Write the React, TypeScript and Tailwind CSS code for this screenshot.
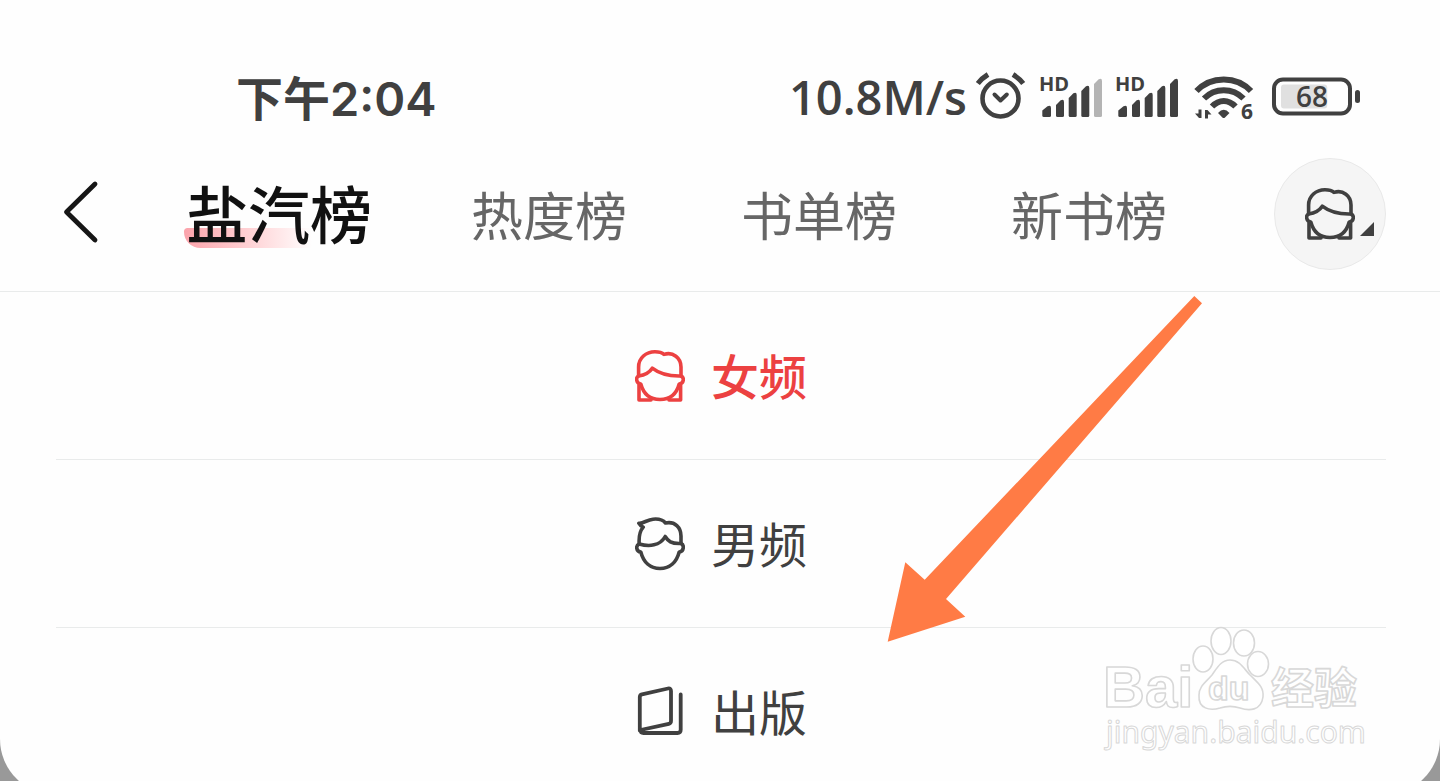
import React, { useState } from 'react'
import clsx from 'clsx'

type ChannelId = 'female' | 'male' | 'publish'

const TABS = ['热度榜', '书单榜', '新书榜']

const CHANNELS: { id: ChannelId; label: string }[] = [
  { id: 'female', label: '女频' },
  { id: 'male', label: '男频' },
  { id: 'publish', label: '出版' },
]

const FemaleIcon: React.FC = () => (
  <svg width="50" height="54" viewBox="0 0 50 54" fill="none" stroke="currentColor" strokeWidth="3.6" strokeLinejoin="round" strokeLinecap="round">
    <path d="M3.6 27V18C3.6 9 11 2.8 20 2.8C24 2.8 27 3.6 29 5.4C38 2.4 46 9 46 18V27" />
    <path d="M3.6 27C10 26 14.5 23.5 17.3 19.2C24 24.5 32 27.4 46 27C49.5 28.5 49 34.5 44.2 35C41.5 45 34.5 50.5 25 50.5C15.5 50.5 8.5 45 5.8 35C1 34.5 0.5 28.5 3.6 27Z" />
    <path d="M4 36V51H16M45.6 36V51H34" />
  </svg>
)

const MaleIcon: React.FC = () => (
  <svg width="50" height="54" viewBox="0 0 50 54" fill="none" stroke="currentColor" strokeWidth="3.6" strokeLinejoin="round" strokeLinecap="round">
    <path d="M4.2 27C3.7 20 4.5 14.5 8.2 10.2C6.5 9.5 4.8 8 3.8 6.2C8 6.8 12 2.8 18 2.2C24 1.6 28 3 30.5 6C40 4 46 10.5 46 19V26.5" />
    <path d="M4.2 27C14 29.8 25 29 30.2 19.5C33 24 36 27 46 26.5C49.5 28 49 34.5 44.2 35C41.5 45.5 34.5 51.5 25 51.5C15.5 51.5 8.5 45.5 5.8 35C1 34.5 0.5 28.5 4.2 27Z" />
  </svg>
)

const BookIcon: React.FC = () => (
  <svg width="50" height="54" viewBox="0 0 50 54" fill="none" stroke="currentColor" strokeWidth="3.8" strokeLinejoin="round" strokeLinecap="round">
    <path d="M4.8 45.5V12Q4.8 9.8 7 9.3L33 3.5Q36 3 36 6V36Q36 38.3 33.8 38.8L5.5 45Q5.5 48 8.5 48H42.5Q45.7 48 45.7 44.8V9.5" />
  </svg>
)

const CHANNEL_ICONS = { female: FemaleIcon, male: MaleIcon, publish: BookIcon }

const AlarmIcon: React.FC = () => (
  <svg width="52" height="48" viewBox="0 2 52 48" className="overflow-visible" fill="none" stroke="#404040" strokeWidth="4.6" strokeLinecap="round" strokeLinejoin="round">
    <circle cx="25.5" cy="26.5" r="18" />
    <path d="M19.5 22.5L25.5 28.5L31.8 22.5" strokeWidth="4" />
    <path d="M2.8 11.5Q6.5 6.5 13 2.5M38 2.5Q44.5 6.5 48.2 11.5" strokeLinecap="butt" strokeWidth="5" />
  </svg>
)

const SIGNAL_BARS = [
  'M3.3 36.5L8.5 32.3Q12 30.5 12 34V41.5Q12 43 10.5 43H4.8Q3.3 43 3.3 41.5Z',
  'M17 31L21.7 26.2Q25 24.5 25 28V41.5Q25 43 23.5 43H18.5Q17 43 17 41.5Z',
  'M29.7 24L34.4 19.2Q37.7 17.5 37.7 21V41.5Q37.7 43 36.2 43H31.2Q29.7 43 29.7 41.5Z',
  'M42.3 17L47 12.2Q50.3 10.5 50.3 14V41.5Q50.3 43 48.8 43H43.8Q42.3 43 42.3 41.5Z',
  'M55 10L59.7 5.2Q63 3.5 63 7V41.5Q63 43 61.5 43H56.5Q55 43 55 41.5Z',
]

const SignalIcon: React.FC<{ level: number }> = ({ level }) => (
  <svg width="64" height="48" viewBox="0 0 64 48" className="overflow-visible font-['Open_Sans',sans-serif] font-bold">
    <text x="0" y="17" fontSize="20" fill="#404040">HD</text>
    {SIGNAL_BARS.map((d, idx) => (
      <path key={d} d={d} fill={idx < level ? '#404040' : '#b4b4b4'} />
    ))}
  </svg>
)

const WifiIcon: React.FC = () => (
  <svg width="63" height="48" viewBox="-3 0 63 48" className="overflow-visible font-['Open_Sans',sans-serif] font-bold">
    <g fill="none" stroke="#404040" strokeWidth="6">
      <path d="M2.5 17C17 1.5 42.5 1.5 57 17" />
      <path d="M10 24.5C21 13.5 38.5 13.5 49.5 24.5" />
      <path d="M18 32.5C25 25 34.5 25 41.5 32.5" />
    </g>
    <path d="M24 39Q29.7 32.5 35.5 39L31 43.5Q29.7 44.7 28.4 43.5Z" fill="#404040" />
    <path d="M4.5 35.5H7.5V44H5L1 39.5H4.5ZM11 36H13.5L17.5 40.5H14V44.5H11Z" fill="#404040" />
    <text x="47" y="45" fontSize="21" fill="#404040">6</text>
  </svg>
)

const BatteryIcon: React.FC<{ percent: number }> = ({ percent }) => (
  <svg width="94" height="48" viewBox="-6 0 94 48" className="font-['Open_Sans',sans-serif] font-semibold">
    <rect x="2" y="5.5" width="76" height="34" rx="9" fill="none" stroke="#404040" strokeWidth="4" />
    <rect x="9" y="10.5" width={percent * 0.68} height="24" rx="3" fill="#e0e0e0" />
    <rect x="83" y="16" width="5" height="13" rx="2.5" fill="#404040" />
    <text x="40" y="33" fontSize="28" textAnchor="middle" fill="#404040">{percent}</text>
  </svg>
)

const StatusBar: React.FC = () => (
  <div className="flex items-center justify-between pt-[72px] pr-20 pl-[236px] text-[47px] leading-[48px] font-semibold text-[#404040]">
    <span>
      下午<span className="font-['Inter',sans-serif]">2:04</span>
    </span>
    <div className="flex items-center gap-3">
      <div className="flex items-center gap-2">
        <span className="pb-0.5 font-['Open_Sans',sans-serif]">10.8M/s</span>
        <AlarmIcon />
      </div>
      <SignalIcon level={4} />
      <SignalIcon level={5} />
      <WifiIcon />
      <BatteryIcon percent={68} />
    </div>
  </div>
)

const Watermark: React.FC = () => (
  <svg
    width="270"
    height="130"
    viewBox="0 0 270 130"
    className="pointer-events-none absolute right-[70px] bottom-[25px] font-['Liberation_Sans','Noto_Sans_CJK_SC',sans-serif]"
    fill="#ffffff"
    stroke="#d8d8d8"
    strokeWidth="1.6"
    strokeLinejoin="round"
  >
    <g fontWeight="700">
      <text x="3" y="81" fontSize="58">Bai</text>
      <ellipse cx="103" cy="33" rx="10" ry="13" />
      <ellipse cx="121" cy="15" rx="10" ry="13.5" />
      <ellipse cx="144" cy="17" rx="10.5" ry="13" />
      <ellipse cx="158" cy="38" rx="10.5" ry="12.5" />
      <path d="M130 34C140 34 144 43 150 49C158 57 164 61 163 71C161 85 149 85 140 82C134 80 126 80 120 82C110 85 98 83 99 69C99 60 106 56 112 49C117 42 121 34 130 34Z" />
      <text x="108" y="74" fontSize="34">du</text>
      <text x="171" y="78" fontSize="43">经验</text>
    </g>
    <text x="6" y="117" fontSize="30" strokeWidth="1" className="font-['Noto_Sans',sans-serif]">jingyan.baidu.com</text>
  </svg>
)

const PointerArrow: React.FC = () => (
  <svg width="316" height="347" viewBox="0 0 316 347" className="pointer-events-none absolute top-[295px] left-[887px]">
    <path d="M0.7 346.7L18.3 267.3L37.7 284.7L307.3 1L315 8.3L59 304L78.3 321.7Z" fill="#ff7b45" />
  </svg>
)

export default function App() {
  const [channel, setChannel] = useState<ChannelId>('female')
  const CurrentIcon = CHANNEL_ICONS[channel]

  return (
    <div className="relative h-screen overflow-hidden bg-[#999999] font-['Noto_Sans_CJK_SC',sans-serif]">
      <main className="rounded-b-[56px] bg-[#fefefe]">
        <StatusBar />

        <header className="flex items-center border-b border-[#e9ebeb] pt-[35px] pr-[54px] pb-[21px] pl-16">
          <button aria-label="返回" className="text-[#161616]">
            <svg width="34" height="62" viewBox="0 2 34 62" className="overflow-visible" fill="none" stroke="currentColor" strokeWidth="4.8" strokeLinecap="round" strokeLinejoin="round">
              <path d="M31 3L2.5 31L31 59" />
            </svg>
          </button>

          <nav className="mr-[107px] ml-[88px] flex flex-1 items-center">
            <button className="relative mr-[99px] pb-1 text-[62px] leading-[72px] font-medium whitespace-nowrap text-[#111111]">
              <span className="absolute bottom-1 -left-0.5 h-5 w-32 rounded-tl rounded-bl-[18px] bg-linear-to-r from-[#fba3ab] to-[#fefefe]" />
              <span className="relative">盐汽榜</span>
            </button>
            <div className="flex flex-1 items-center justify-between">
              {TABS.map((tab) => (
                <button key={tab} className="text-[52px] leading-[72px] whitespace-nowrap text-[#666666]">
                  {tab}
                </button>
              ))}
            </div>
          </nav>

          <button
            aria-label="切换频道"
            className="relative flex size-28 items-center justify-center rounded-full border border-[#e9e9e9] bg-[#f5f5f5] text-[#404040]"
          >
            <CurrentIcon />
            <svg width="14" height="14" viewBox="0 0 14 14" className="absolute right-[11px] bottom-[33px]">
              <path d="M0 14H14V0Z" fill="currentColor" />
            </svg>
          </button>
        </header>

        <ul className="pr-[54px] pl-14">
          {CHANNELS.map(({ id, label }) => {
            const Icon = CHANNEL_ICONS[id]
            const active = id === channel

            return (
              <li key={id} className="border-b border-[#e9ebeb] last:border-b-0">
                <button
                  onClick={() => setChannel(id)}
                  className={clsx(
                    'flex h-[167px] w-full items-center justify-center gap-[26px] text-[48px] leading-[72px]',
                    active ? 'font-medium text-[#ec4141]' : 'text-[#404040]',
                  )}
                >
                  <Icon />
                  <span className="pb-1">{label}</span>
                </button>
              </li>
            )
          })}
        </ul>
      </main>

      <PointerArrow />
      <Watermark />
    </div>
  )
}
